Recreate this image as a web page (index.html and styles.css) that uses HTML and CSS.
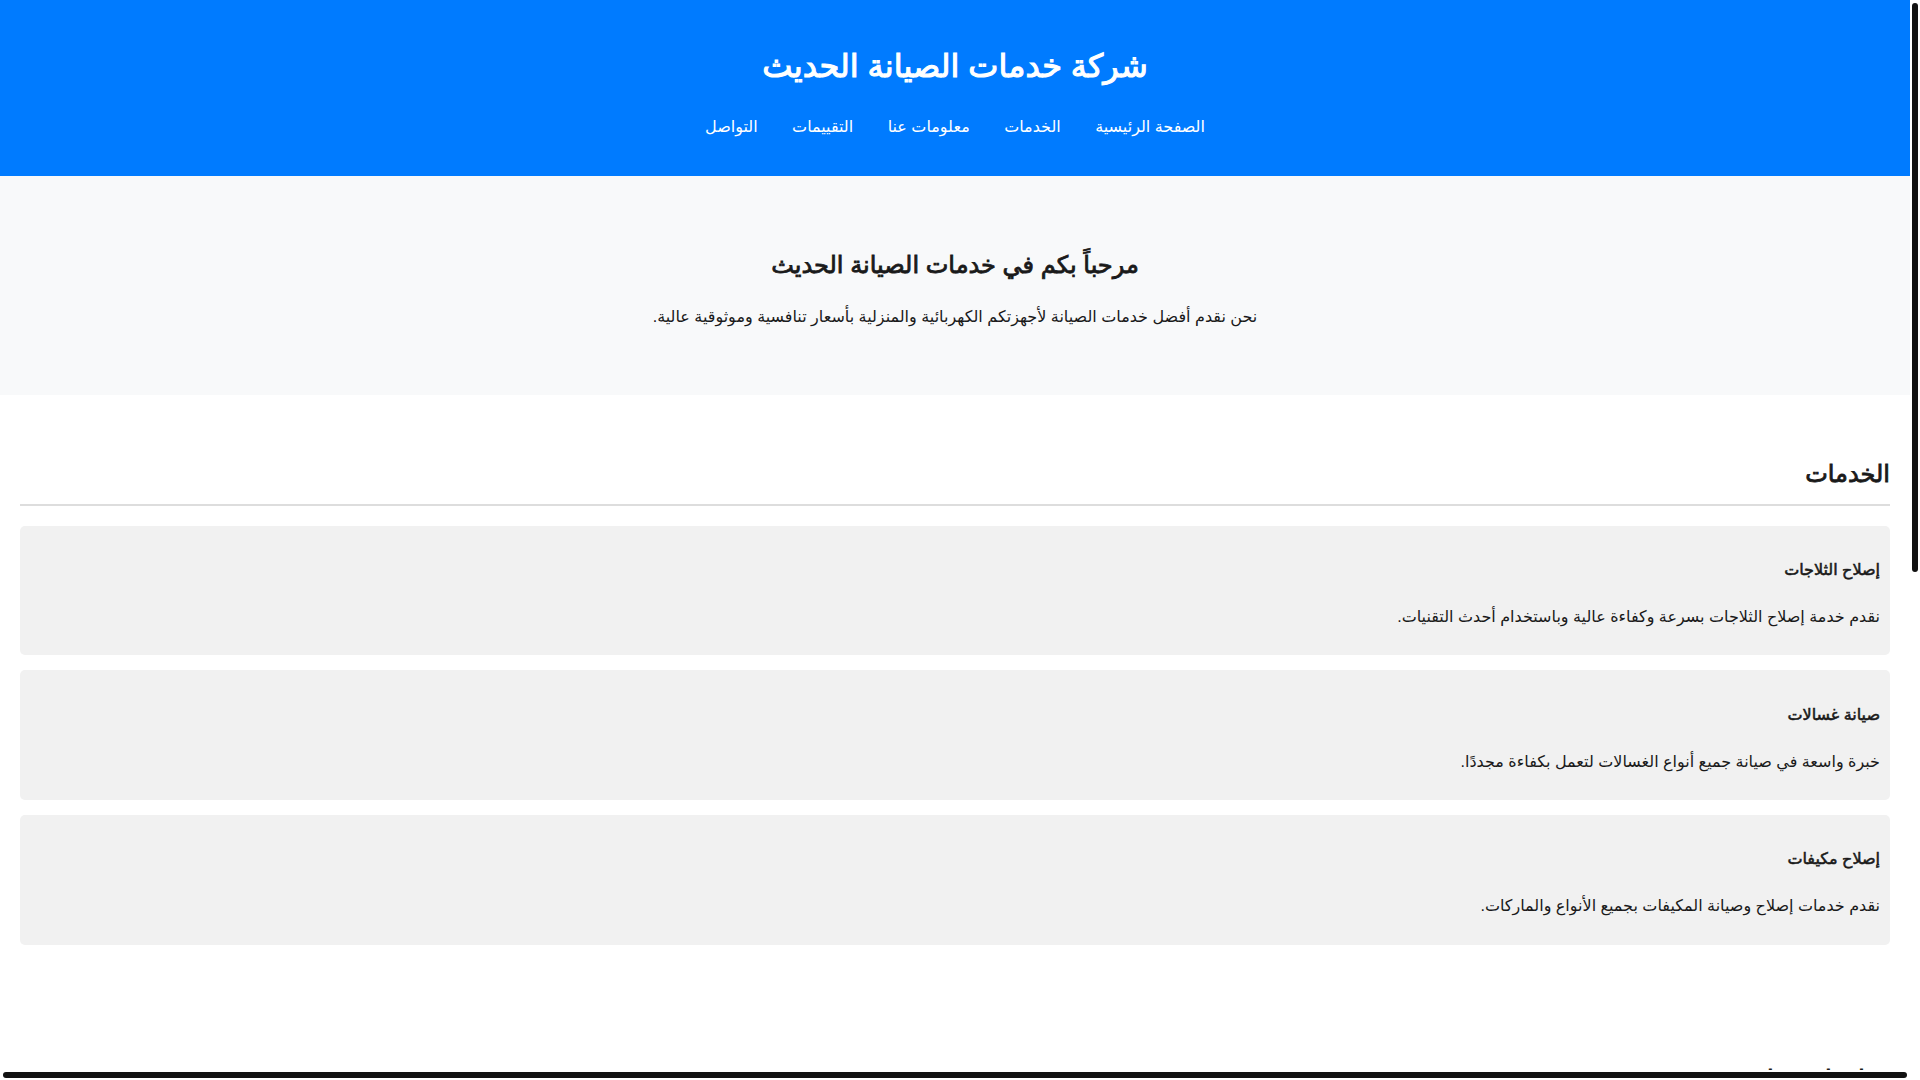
FILE: index.html
```html
<!DOCTYPE html>
<html lang="ar" dir="rtl">
<head>
  <meta charset="UTF-8" />
  <title>شركة خدمات الصيانة الحديث</title>
  <link rel="stylesheet" href="styles.css">
</head>
<body>
  <header>
    <h1>شركة خدمات الصيانة الحديث</h1>
    <nav>
      <ul>
        <li><a href="#home">الصفحة الرئيسية</a></li>
        <li><a href="#services">الخدمات</a></li>
        <li><a href="#about">معلومات عنا</a></li>
        <li><a href="#reviews">التقييمات</a></li>
        <li><a href="#contact">التواصل</a></li>
      </ul>
    </nav>
  </header>

  <section id="home" class="hero">
    <h2>مرحباً بكم في خدمات الصيانة الحديث</h2>
    <p>نحن نقدم أفضل خدمات الصيانة لأجهزتكم الكهربائية والمنزلية بأسعار تنافسية وموثوقية عالية.</p>
  </section>

  <section id="services" class="section">
    <h2>الخدمات</h2>
    <div class="service">
      <h3>إصلاح الثلاجات</h3>
      <p>نقدم خدمة إصلاح الثلاجات بسرعة وكفاءة عالية وباستخدام أحدث التقنيات.</p>
    </div>
    <div class="service">
      <h3>صيانة غسالات</h3>
      <p>خبرة واسعة في صيانة جميع أنواع الغسالات لتعمل بكفاءة مجددًا.</p>
    </div>
    <div class="service">
      <h3>إصلاح مكيفات</h3>
      <p>نقدم خدمات إصلاح وصيانة المكيفات بجميع الأنواع والماركات.</p>
    </div>
  </section>

  <section id="about" class="section">
    <h2>معلومات عنا</h2>
    <p>نحن فريق من الفنيين المحترفين ذوي الخبرة الطويلة في مجال صيانة الأجهزة المنزلية، نسعى دائماً لتقديم أفضل خدمة لعملائنا.</p>
  </section>

  <section id="reviews" class="section">
    <h2>التقييمات</h2>
    <div class="service">
      <h3>أحمد محمد</h3>
      <p>خدمة ممتازة وسريعة، أنصح بالتعامل معهم.</p>
    </div>
    <div class="service">
      <h3>سارة علي</h3>
      <p>فنيون محترفون وأسعار مناسبة جداً.</p>
    </div>
  </section>

  <section id="contact" class="section">
    <h2>التواصل</h2>
    <form class="contact-form">
      <input type="text" placeholder="الاسم">
      <input type="tel" placeholder="رقم الهاتف">
      <textarea placeholder="رسالتك"></textarea>
      <button type="button">إرسال</button>
    </form>
  </section>

  <footer>
    <p>جميع الحقوق محفوظة &copy; شركة خدمات الصيانة الحديث</p>
  </footer>

  <!-- window scrollbars -->
  <div class="scroll-track scroll-v"><div class="scroll-thumb"></div></div>
  <div class="scroll-track scroll-h"><div class="scroll-thumb"></div></div>
</body>
</html>
```

FILE: styles.css
```css
html {
  overflow-x: hidden;
}

body {
  font-family: "Liberation Sans", "DejaVu Sans", sans-serif;
  margin: 0 10px 0 0;
  padding: 0;
  line-height: 1.6;
  color: #1a1a1a;
  background: #fff;
}

/* headings: bold drawn on the regular Arabic glyphs */
h1, h2, h3 {
  font-weight: normal;
  -webkit-text-stroke: 0.035em currentColor;
}

header {
  background: #007bff;
  color: #fff;
  padding: 20px 0;
  text-align: center;
}

header h1 {
  font-size: 2em;
  margin: 0.67em 0;
}

nav ul {
  list-style: none;
  padding: 0;
}

nav li {
  display: inline;
  margin: 0 15px;
}

nav a {
  color: #fff;
  text-decoration: none;
}

.hero {
  background: #f8f9fa;
  padding: 50px 20px;
  text-align: center;
}

.hero h2 {
  font-size: 1.5em;
}

.section {
  padding: 40px 20px;
}

.section h2 {
  font-size: 1.5em;
  border-bottom: 2px solid #ddd;
  padding-bottom: 10px;
}

.service {
  background: #f1f1f1;
  padding: 10px;
  margin: 15px 0;
  border-radius: 5px;
}

.service h3 {
  font-size: 1em;
  margin: 1.33em 0;
}

.contact-form input,
.contact-form textarea {
  display: block;
  width: 100%;
  box-sizing: border-box;
  padding: 10px;
  margin-bottom: 10px;
  border: 1px solid #ccc;
  border-radius: 5px;
  font-family: inherit;
}

.contact-form button {
  background: #007bff;
  color: #fff;
  border: none;
  padding: 10px 20px;
  border-radius: 5px;
  cursor: pointer;
}

footer {
  background: #333;
  color: #fff;
  text-align: center;
  padding: 10px 0;
}

.scroll-track {
  position: fixed;
  background: #fff;
}

.scroll-v {
  top: 0;
  right: 0;
  bottom: 0;
  width: 10px;
}

.scroll-h {
  left: 0;
  right: 10px;
  bottom: 0;
  height: 10px;
}

.scroll-thumb {
  background: #111;
  border-radius: 3px;
}

.scroll-v .scroll-thumb {
  margin: 3px 2px 0;
  width: 6px;
  height: 569px;
}

.scroll-h .scroll-thumb {
  margin: 2px 3px 0;
  height: 6px;
}
```
